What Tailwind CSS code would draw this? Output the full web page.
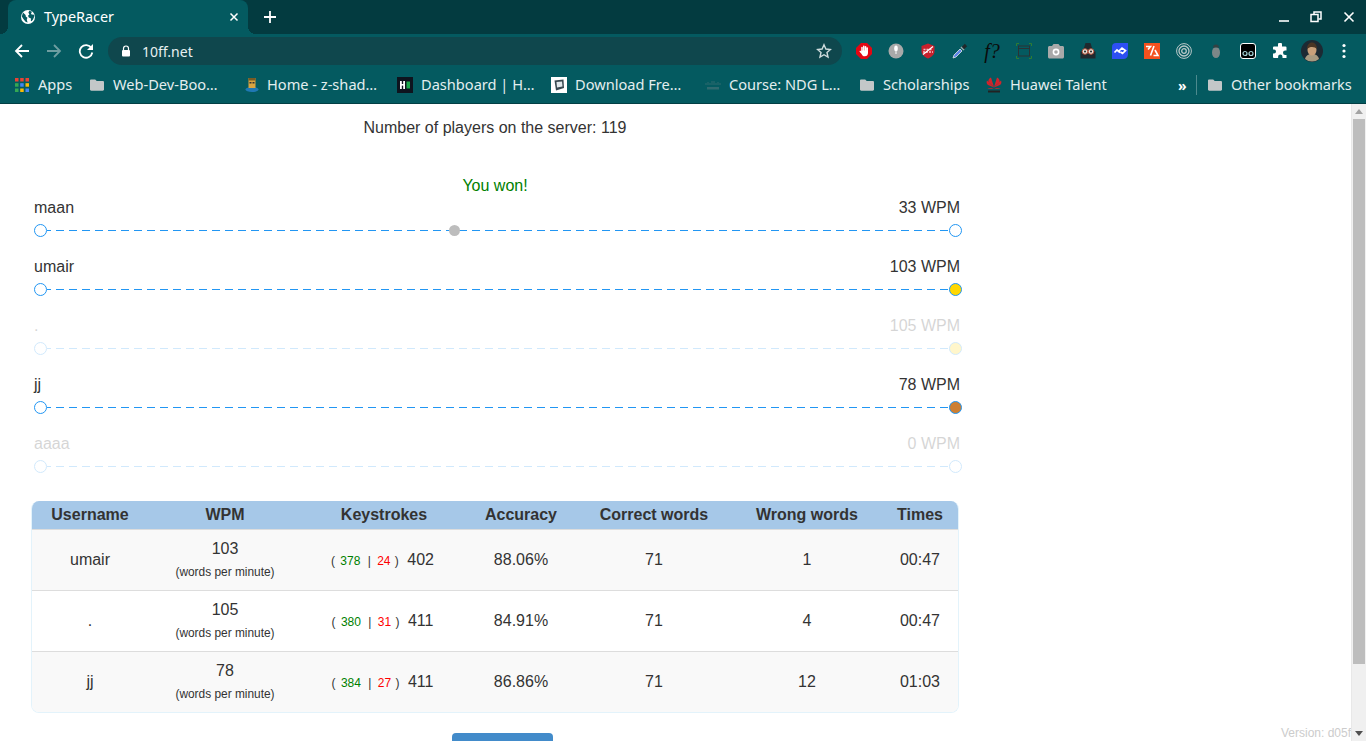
<!DOCTYPE html>
<html lang="en">
<head>
    <meta charset="UTF-8">
    <meta name="viewport" content="width=device-width, initial-scale=1.0">
    <title>TypeRacer</title>
    <script src="https://cdn.jsdelivr.net/npm/@tailwindcss/browser@4"></script>
</head>
<body class="h-[741px] overflow-hidden bg-white font-['Liberation_Sans',Arial,sans-serif] text-[#333]">

    <!-- Tab strip -->
    <div class="flex h-[34px] items-end bg-[#033b40] pl-2 font-['Noto_Sans',sans-serif]">
        <div class="relative flex h-[34px] w-[240px] items-center rounded-t-lg bg-[#045a60] pl-[13px] pr-[9px] text-white">
            <span class="absolute bottom-0 left-[-8px] h-2 w-2 bg-[radial-gradient(circle_at_0_0,transparent_8px,#045a60_8px)]"></span>
            <span class="absolute bottom-0 right-[-8px] h-2 w-2 bg-[radial-gradient(circle_at_100%_0,transparent_8px,#045a60_8px)]"></span>
            <svg class="h-[14px] w-[14px] shrink-0" viewBox="0 0 14 14"><circle cx="7" cy="7" r="7" fill="#fff"/><path d="M2 2.600 4.600 5l.2 1.600 1.600 1.200-.6 2 .8 2.600-2-.6L2.400 9 .8 6.400zM8.400.8l2.600 1-1 1.600.6 1.200 2.600.2v2L12 9.600l-1.400 1.600-.8-.4.2-2.400-2.200-1-.8-1.600 1.400-1.400L7.400 2.600z" fill="#045a60"/></svg>
            <span class="mb-px ml-[9px] flex-1 text-[14.400px]">TypeRacer</span>
            <svg class="h-[10px] w-[10px]" viewBox="0 0 10 10"><path d="M1.500 1.500l7 7M8.500 1.500l-7 7" stroke="#fff" stroke-width="1.500"/></svg>
        </div>
        <div class="flex h-[34px] w-11 items-center justify-center">
            <svg class="h-3 w-3" viewBox="0 0 12 12"><path d="M6 0v12M0 6h12" stroke="#fff" stroke-width="1.800"/></svg>
        </div>
        <div class="ml-auto flex h-[34px] items-center">
            <div class="flex w-8 justify-center"><svg class="h-3 w-3" viewBox="0 0 12 12"><path d="M1 10h10" stroke="#fff" stroke-width="1.600"/></svg></div>
            <div class="flex w-8 justify-center"><svg class="h-3 w-3" viewBox="0 0 12 12" fill="none" stroke="#fff" stroke-width="1.500"><path d="M4 3V1h7v7H8.500"/><rect x="1" y="3.500" width="7" height="7"/></svg></div>
            <div class="flex w-[34px] justify-center"><svg class="h-3 w-3" viewBox="0 0 12 12"><path d="M1.500 1.500l9 9M10.500 1.500l-9 9" stroke="#fff" stroke-width="1.600"/></svg></div>
        </div>
    </div>

    <!-- Toolbar -->
    <div class="flex h-[33px] items-center bg-[#045a60] pl-[6px] font-['Noto_Sans',sans-serif]">
        <div class="flex w-8 justify-center"><svg class="h-4 w-4" viewBox="0 0 16 16" fill="none" stroke="#fff" stroke-width="1.800"><path d="M15 8H2M8 2 2 8l6 6"/></svg></div>
        <div class="flex w-8 justify-center"><svg class="h-4 w-4" viewBox="0 0 16 16" fill="none" stroke="#6f9ea1" stroke-width="1.800"><path d="M1 8h13M8 2l6 6-6 6"/></svg></div>
        <div class="flex w-8 justify-center"><svg class="h-4 w-4" viewBox="0 0 16 16" fill="none"><path d="M13.400 5A6.300 6.300 0 1 0 14.300 9.500" stroke="#fff" stroke-width="1.800"/><path d="M15 1v6H9z" fill="#fff"/></svg></div>
        <div class="ml-[6px] flex h-7 w-[734px] items-center rounded-full bg-[#0f474d] pl-[12px] pr-[10px]">
            <svg class="h-3 w-3" viewBox="0 0 12 12"><path d="M3.500 5V3.500a2.500 2.500 0 0 1 5 0V5" fill="none" stroke="#fff" stroke-width="1.200"/><rect x="2" y="5" width="8" height="6.500" rx="1" fill="#fff"/></svg>
            <span class="mt-px ml-[10px] flex-1 text-[14px] text-[#e8f0f1]">10ff.net</span>
            <svg class="h-4 w-4" viewBox="0 0 16 16"><path d="M8 1.800l1.900 4.200 4.500.5-3.400 3 1 4.500L8 11.700 4 14l1-4.500-3.400-3 4.500-.5z" fill="none" stroke="#cfdcdd" stroke-width="1.400"/></svg>
        </div>
        <div class="ml-[6px] flex h-7 items-center">
            <!-- extensions -->
            <div class="flex h-7 w-8 items-center justify-center"><svg class="h-4 w-4" viewBox="0 0 16 16"><path d="M5 0h6l5 5v6l-5 5H5l-5-5V5z" fill="#e30613"/><path d="M6 8V4.500M7.800 8V3.200M9.600 8V3.700M11.200 8.500V5" stroke="#fff" stroke-width="1.500" stroke-linecap="round"/><path d="M5.300 7.500h6.700V10c0 2-1.200 3.300-3.200 3.300-1.700 0-2.500-.8-3.200-2.300L3.600 8.700c-.4-.8.600-1.400 1.200-.8l.5.6z" fill="#fff"/></svg></div>
            <div class="flex h-7 w-8 items-center justify-center"><svg class="h-4 w-4" viewBox="0 0 16 16"><circle cx="8" cy="8" r="7.500" fill="#a9a9a9"/><ellipse cx="8" cy="5.500" rx="1.800" ry="3" fill="#fff"/><path d="M8 8.500v2.500" stroke="#fff"/></svg></div>
            <div class="flex h-7 w-8 items-center justify-center"><svg class="h-4 w-4" viewBox="0 0 16 16"><path d="M8 .5l6.500 2.500v5.500c0 3-3 5.500-6.500 7-3.500-1.500-6.500-4-6.500-7V3z" fill="#c8202c"/><path d="M3 9h10M3.500 6.500h9" stroke="#f3c3c6" stroke-width="1.300" stroke-dasharray="2 1"/><path d="M3 11.500 13 3.500" stroke="#fff" stroke-width="1.300"/></svg></div>
            <div class="flex h-7 w-8 items-center justify-center"><svg class="h-4 w-4" viewBox="0 0 16 16" fill="none"><path d="M1 15l1-3L8 6l2 2-6 6z" fill="#5f86e8" stroke="#dfe6ea" stroke-width=".8"/><path d="M9 4l3 3" stroke="#9aa7aa" stroke-width="1.600"/><path d="M11 5l3-3" stroke="#20282a" stroke-width="3.200"/></svg></div>
            <div class="flex h-7 w-8 items-center justify-center font-['Liberation_Serif',serif] text-[20px] leading-4 text-[#0b0b0b] italic">f?</div>
            <div class="flex h-7 w-8 items-center justify-center"><svg class="h-4 w-4" viewBox="0 0 16 16" fill="none"><path d="M.5 3V.5H3M13 .5h2.500V3M.5 13v2.500H3M13 15.500h2.500V13" stroke="#2f7d32"/><rect x="2.500" y="3" width="11" height="10" stroke="#2b3335"/><path d="M2.500 5.500h11" stroke="#2b3335"/></svg></div>
            <div class="flex h-7 w-8 items-center justify-center"><svg class="h-4 w-4" viewBox="0 0 16 16"><path d="M0 4.500C0 3.500.8 3 1.500 3H4l1.500-2h5L12 3h2.500c.7 0 1.500.5 1.500 1.500V14c0 .8-.7 1.500-1.500 1.500h-13C.7 15.500 0 14.800 0 14z" fill="#a9a9a9"/><circle cx="8" cy="9" r="3.400" fill="#fff"/><circle cx="8" cy="9" r="1.800" fill="#a9a9a9"/></svg></div>
            <div class="flex h-7 w-8 items-center justify-center"><svg class="h-4 w-4" viewBox="0 0 16 16"><path d="M5.500 0h5l2 6.500 3 2V15.500H.5v-7l3-2z" fill="#20292e"/><circle cx="5" cy="8.500" r="2.800" fill="#e6e0d8" stroke="#b5533c"/><circle cx="11" cy="8.500" r="2.800" fill="#e6e0d8" stroke="#b5533c"/><circle cx="5" cy="8.500" r="1" fill="#222"/><circle cx="11" cy="8.500" r="1" fill="#222"/></svg></div>
            <div class="flex h-7 w-8 items-center justify-center"><svg class="h-4 w-4" viewBox="0 0 16 16" fill="none"><path d="M4 0h12v11.500A4.500 4.500 0 0 1 11.500 16H0V4a4 4 0 0 1 4-4z" fill="#2d4ff2"/><path d="M2.500 9.500 5 7l3 2.500M7 8l3-3 3.500 2.500-3 3-2-1.500" stroke="#fff" stroke-width="1.700"/></svg></div>
            <div class="flex h-7 w-8 items-center justify-center"><svg class="h-4 w-4" viewBox="0 0 16 16" fill="none"><rect width="16" height="16" fill="#f4511e"/><path d="M2 3.500h4.500L4 6.500M10 3 6.500 12.500M11 7l3 5.500H9.500" stroke="#fff" stroke-width="1.600"/></svg></div>
            <div class="flex h-7 w-8 items-center justify-center"><svg class="h-4 w-4" viewBox="0 0 16 16" fill="none" stroke="#b9c8c9"><circle cx="8" cy="8" r="7.400"/><circle cx="8" cy="8" r="5" stroke-width="1.300"/><circle cx="8" cy="8" r="2.300" stroke-width="1.300"/></svg></div>
            <div class="flex h-7 w-8 items-center justify-center"><svg class="h-4 w-4" viewBox="0 0 16 16"><ellipse cx="8" cy="9.500" rx="4" ry="5.500" fill="#7d8788"/><path d="M5 4.500a3 3 0 0 1 6 0z" fill="#334143"/></svg></div>
            <div class="flex h-7 w-8 items-center justify-center"><svg class="h-4 w-4" viewBox="0 0 16 16"><rect x=".5" y=".5" width="15" height="15" rx="2.500" fill="#000" stroke="#fff"/><circle cx="5" cy="10.500" r="2" fill="none" stroke="#a5d5d8" stroke-width="1.200"/><circle cx="11" cy="10.500" r="2" fill="none" stroke="#a5d5d8" stroke-width="1.200"/></svg></div>
            <div class="flex h-7 w-8 items-center justify-center"><svg class="h-4 w-4" viewBox="0 0 16 16"><path d="M6 1.500a2 2 0 0 1 4 0V3.500h3.500A1 1 0 0 1 14.500 4.500V7.500h-1.300a2.200 2.200 0 0 0 0 4.400h1.300V15h-4v-1.200a2.200 2.200 0 0 0-4.400 0V15H2a1 1 0 0 1-1-1V10.500h1a2 2 0 0 0 0-4H1V4.500a1 1 0 0 1 1-1h4z" fill="#fff"/></svg></div>
            <div class="flex h-7 w-8 items-center justify-center"><svg class="h-[22px] w-[22px]" viewBox="0 0 22 22"><circle cx="11" cy="11" r="11" fill="#1c2a33"/><path d="M4 19c1-3.500 3-5 7-5s6 1.500 7 5a11 11 0 0 1-14 0z" fill="#a89a80"/><ellipse cx="11" cy="10" rx="4.500" ry="5.500" fill="#c9a07a"/><path d="M6 9c0-5 3-6.500 5-6.500S16 4 16 9c-2-2.500-7-3-10 0z" fill="#4a3524"/></svg></div>
            <div class="flex h-7 w-8 items-center justify-center"><svg class="h-4 w-4" viewBox="0 0 16 16" fill="#fff"><circle cx="8" cy="2.500" r="1.600"/><circle cx="8" cy="8" r="1.600"/><circle cx="8" cy="13.500" r="1.600"/></svg></div>
        </div>
    </div>

    <!-- Bookmarks bar -->
    <div class="flex h-[37px] items-center border-b border-[#023f44] bg-[#045a60] pl-[15px] font-['Noto_Sans',sans-serif] text-[14.600px] text-[#e3eeef]">
        <div class="flex w-[75px] items-center gap-[9px]">
            <svg class="h-[14px] w-[14px]" viewBox="0 0 14 14"><rect width="3.500" height="3.500" fill="#ea4335"/><rect x="5.200" width="3.500" height="3.500" fill="#ea4335"/><rect x="10.500" width="3.500" height="3.500" fill="#ea4335"/><rect y="5.200" width="3.500" height="3.500" fill="#34a853"/><rect x="5.200" y="5.200" width="3.500" height="3.500" fill="#4285f4"/><rect x="10.500" y="5.200" width="3.500" height="3.500" fill="#fbbc05"/><rect y="10.500" width="3.500" height="3.500" fill="#34a853"/><rect x="5.200" y="10.500" width="3.500" height="3.500" fill="#fbbc05"/><rect x="10.500" y="10.500" width="3.500" height="3.500" fill="#4285f4"/></svg>
            <span>Apps</span>
        </div>
        <div class="flex w-[155px] items-center gap-[9px]">
            <svg class="h-[14px] w-[14px]" viewBox="0 0 14 14"><path d="M0 2.500C0 1.700.6 1.500 1.200 1.500h4L6.700 3h6c.8 0 1.300.5 1.300 1.200v7.300c0 .7-.5 1.200-1.300 1.200H1.300C.5 12.700 0 12.200 0 11.500z" fill="#c3c7c8"/></svg>
            <span>Web-Dev-Boo…</span>
        </div>
        <div class="flex w-[152px] items-center gap-[8px]">
            <svg class="h-[14px] w-[14px]" viewBox="0 0 14 14"><ellipse cx="7" cy="11.500" rx="6.500" ry="2.500" fill="#1f78b4"/><rect x="3.500" y="0" width="7" height="10" fill="#d9a441"/><rect x="3.500" y="0" width="7" height="2.500" fill="#7a5a22"/><rect x="4.500" y="4" width="2" height="1.500" fill="#333"/><rect x="7.500" y="4" width="2" height="1.500" fill="#333"/></svg>
            <span>Home - z-shad…</span>
        </div>
        <div class="flex w-[154px] items-center gap-[8px]">
            <svg class="h-4 w-4" viewBox="0 0 16 16"><rect width="16" height="16" fill="#0e141e"/><rect x="3" y="4" width="1.800" height="8" fill="#fff"/><rect x="6.200" y="4" width="1.800" height="8" fill="#fff"/><rect x="4" y="7" width="3" height="1.600" fill="#fff"/><rect x="9.500" y="4.500" width="3.500" height="7" fill="#1ba94c"/></svg>
            <span>Dashboard | H…</span>
        </div>
        <div class="flex w-[154px] items-center gap-[8px]">
            <svg class="h-4 w-4" viewBox="0 0 16 16"><rect width="16" height="16" fill="#fff"/><path d="M3.500 3.500 12.500 2.500 13 11 5 13.500z" fill="#37474f"/><path d="M5.500 5 11 4.500 11.500 9.500 6 10.500z" fill="#dfe7ea"/></svg>
            <span>Download Fre…</span>
        </div>
        <div class="flex w-[155px] items-center gap-[8px]">
            <svg class="h-4 w-4" viewBox="0 0 16 16"><path d="M1 6v2M3 5v3M5 6v2M7 4v4M9 4v4M11 6v2M13 5v3M15 6v2" stroke="#2f6a6f"/><rect x="2" y="10" width="12" height="2.500" fill="#2f6a6f"/></svg>
            <span>Course: NDG L…</span>
        </div>
        <div class="flex w-[126px] items-center gap-[9px]">
            <svg class="h-[14px] w-[14px]" viewBox="0 0 14 14"><path d="M0 2.500C0 1.700.6 1.500 1.200 1.500h4L6.700 3h6c.8 0 1.300.5 1.300 1.200v7.300c0 .7-.5 1.200-1.300 1.200H1.300C.5 12.700 0 12.200 0 11.500z" fill="#c3c7c8"/></svg>
            <span>Scholarships</span>
        </div>
        <div class="flex w-[192px] items-center gap-[8px]">
            <svg class="h-4 w-4" viewBox="0 0 16 16"><path d="M8 10 5 .5C3 1 2 3.500 2.500 5zM8 10l3-9.500c2 .5 3 3 2.500 4.500zM8 10.500 1 3.500c-1 2 0 4 1 4.500zM8 10.500l7-7c1 2 0 4-1 4.500zM8 11H1.500c1 1 3 1.200 6.500 0zM8 11h6.500c-1 1-3 1.200-6.500 0z" fill="#d4232b"/><rect x="2" y="13.500" width="12" height="2" fill="#222"/></svg>
            <span>Huawei Talent</span>
        </div>
        <span class="w-[18px] text-[14px] font-bold text-white">»</span>
        <span class="h-5 w-px bg-[#4d8a8e]"></span>
        <div class="ml-[11px] flex items-center gap-[9px] whitespace-nowrap">
            <svg class="h-[14px] w-[14px]" viewBox="0 0 14 14"><path d="M0 2.500C0 1.700.6 1.500 1.200 1.500h4L6.700 3h6c.8 0 1.300.5 1.300 1.200v7.300c0 .7-.5 1.200-1.300 1.200H1.300C.5 12.700 0 12.200 0 11.500z" fill="#c3c7c8"/></svg>
            <span>Other bookmarks</span>
        </div>
    </div>

    <!-- Page -->
    <div class="flex h-[637px]">
        <main class="relative w-[1351px] overflow-hidden pl-8 text-[16px]">
            <div class="w-[926px]">
                <p class="mt-[12px] text-center leading-6">Number of players on the server: 119</p>
                <p class="mt-[35px] text-center leading-[21px] text-[#008000]">You won!</p>

                <div class="ml-[2px] w-[928px]">
                    <div class="h-[59px]">
                        <div class="flex h-[23px] items-center justify-between pr-[2px]"><span>maan</span><span>33 WPM</span></div>
                        <div class="relative mt-[5px] flex items-center justify-between">
                            <span class="h-[13px] w-[13px] rounded-full border-[1.500px] border-[#2196f3] bg-white"></span>
                            <svg class="h-px flex-1"><line x1="0" y1="0.500" x2="100%" y2="0.500" stroke="#2196f3" stroke-dasharray="8 5" stroke-dashoffset="4"/></svg>
                            <span class="h-[13px] w-[13px] rounded-full border-[1.500px] border-[#2196f3] bg-white"></span>
                            <span class="absolute left-[415px] h-[11px] w-[11px] rounded-full bg-[#bdbdbd]"></span>
                        </div>
                    </div>
                    <div class="h-[59px]">
                        <div class="flex h-[23px] items-center justify-between pr-[2px]"><span>umair</span><span>103 WPM</span></div>
                        <div class="mt-[5px] flex items-center justify-between">
                            <span class="h-[13px] w-[13px] rounded-full border-[1.500px] border-[#2196f3] bg-white"></span>
                            <svg class="h-px flex-1"><line x1="0" y1="0.500" x2="100%" y2="0.500" stroke="#2196f3" stroke-dasharray="8 5" stroke-dashoffset="4"/></svg>
                            <span class="h-[13px] w-[13px] rounded-full border-[1.500px] border-[#2196f3] bg-[#ffd700]"></span>
                        </div>
                    </div>
                    <div class="h-[59px] opacity-20">
                        <div class="flex h-[23px] items-center justify-between pr-[2px]"><span>.</span><span>105 WPM</span></div>
                        <div class="mt-[5px] flex items-center justify-between">
                            <span class="h-[13px] w-[13px] rounded-full border-[1.500px] border-[#2196f3] bg-white"></span>
                            <svg class="h-px flex-1"><line x1="0" y1="0.500" x2="100%" y2="0.500" stroke="#2196f3" stroke-dasharray="8 5" stroke-dashoffset="4"/></svg>
                            <span class="h-[13px] w-[13px] rounded-full border-[1.500px] border-[#2196f3] bg-[#ffd700]"></span>
                        </div>
                    </div>
                    <div class="h-[59px]">
                        <div class="flex h-[23px] items-center justify-between pr-[2px]"><span>jj</span><span>78 WPM</span></div>
                        <div class="mt-[5px] flex items-center justify-between">
                            <span class="h-[13px] w-[13px] rounded-full border-[1.500px] border-[#2196f3] bg-white"></span>
                            <svg class="h-px flex-1"><line x1="0" y1="0.500" x2="100%" y2="0.500" stroke="#2196f3" stroke-dasharray="8 5" stroke-dashoffset="4"/></svg>
                            <span class="h-[13px] w-[13px] rounded-full border-[1.500px] border-[#2196f3] bg-[#cd7f32]"></span>
                        </div>
                    </div>
                    <div class="h-[59px] opacity-20">
                        <div class="flex h-[23px] items-center justify-between pr-[2px]"><span>aaaa</span><span>0 WPM</span></div>
                        <div class="mt-[5px] flex items-center justify-between">
                            <span class="h-[13px] w-[13px] rounded-full border-[1.500px] border-[#2196f3] bg-white"></span>
                            <svg class="h-px flex-1"><line x1="0" y1="0.500" x2="100%" y2="0.500" stroke="#2196f3" stroke-dasharray="8 5" stroke-dashoffset="4"/></svg>
                            <span class="h-[13px] w-[13px] rounded-full border-[1.500px] border-[#2196f3] bg-white"></span>
                        </div>
                    </div>
                </div>

                <div class="mt-[10px] -mx-px overflow-hidden rounded-lg border-x border-b border-[#e3f3fb]">
                    <table class="w-full table-fixed text-center">
                        <colgroup>
                            <col class="w-[116px]"><col class="w-[154px]"><col class="w-[164px]"><col class="w-[110px]"><col class="w-[156px]"><col class="w-[150px]"><col>
                        </colgroup>
                        <thead class="bg-[#a6c8e8] font-bold">
                            <tr class="h-7"><th>Username</th><th>WPM</th><th>Keystrokes</th><th>Accuracy</th><th>Correct words</th><th>Wrong words</th><th>Times</th></tr>
                        </thead>
                        <tbody>
                            <tr class="h-[61px] border-t border-[#ddd] bg-[#f9f9f9]">
                                <td>umair</td>
                                <td class="pb-[2px]"><div class="leading-6">103</div><div class="mt-[2px] text-[11.900px] leading-[18px]">(words per minute)</div></td>
                                <td class="pr-[3px]"><span class="text-xs">( <span class="mx-[2px] text-[#008000]">378</span> <span class="mx-[2px]">|</span> <span class="mx-px text-[#ff0000]">24</span> )</span> <span class="ml-[4px]">402</span></td>
                                <td>88.06%</td><td>71</td><td>1</td><td>00:47</td>
                            </tr>
                            <tr class="h-[61px] border-t border-[#ddd] bg-white">
                                <td>.</td>
                                <td class="pb-[2px]"><div class="leading-6">105</div><div class="mt-[2px] text-[11.900px] leading-[18px]">(words per minute)</div></td>
                                <td class="pr-[3px]"><span class="text-xs">( <span class="mx-[2px] text-[#008000]">380</span> <span class="mx-[2px]">|</span> <span class="mx-px text-[#ff0000]">31</span> )</span> <span class="ml-[4px]">411</span></td>
                                <td>84.91%</td><td>71</td><td>4</td><td>00:47</td>
                            </tr>
                            <tr class="h-[61px] border-t border-[#ddd] bg-[#f9f9f9]">
                                <td>jj</td>
                                <td class="pb-[2px]"><div class="leading-6">78</div><div class="mt-[2px] text-[11.900px] leading-[18px]">(words per minute)</div></td>
                                <td class="pr-[3px]"><span class="text-xs">( <span class="mx-[2px] text-[#008000]">384</span> <span class="mx-[2px]">|</span> <span class="mx-px text-[#ff0000]">27</span> )</span> <span class="ml-[4px]">411</span></td>
                                <td>86.86%</td><td>71</td><td>12</td><td>01:03</td>
                            </tr>
                        </tbody>
                    </table>
                </div>

                <div class="mt-[20px] ml-[420px] h-[34px] w-[101px] rounded-[4px] bg-[#428bca]"></div>
            </div>
            <span class="absolute bottom-0 left-[1281px] text-xs leading-4 whitespace-nowrap text-[#ccc]">Version: d05f</span>
        </main>

        <!-- Scrollbar -->
        <div class="flex w-[15px] flex-col items-center border-l border-[#e8e8e8] bg-[#f0f0f0]">
            <svg class="mt-[5px] h-[5px] w-[8px]" viewBox="0 0 8 5"><path d="M4 0l4 5H0z" fill="#a3a3a3"/></svg>
            <div class="mt-[5px] h-[545px] w-3 bg-[#bdbdbd]"></div>
            <svg class="mt-auto mb-[5px] h-[5px] w-[8px]" viewBox="0 0 8 5"><path d="M0 0h8L4 5z" fill="#505050"/></svg>
        </div>
    </div>
</body>
</html>
